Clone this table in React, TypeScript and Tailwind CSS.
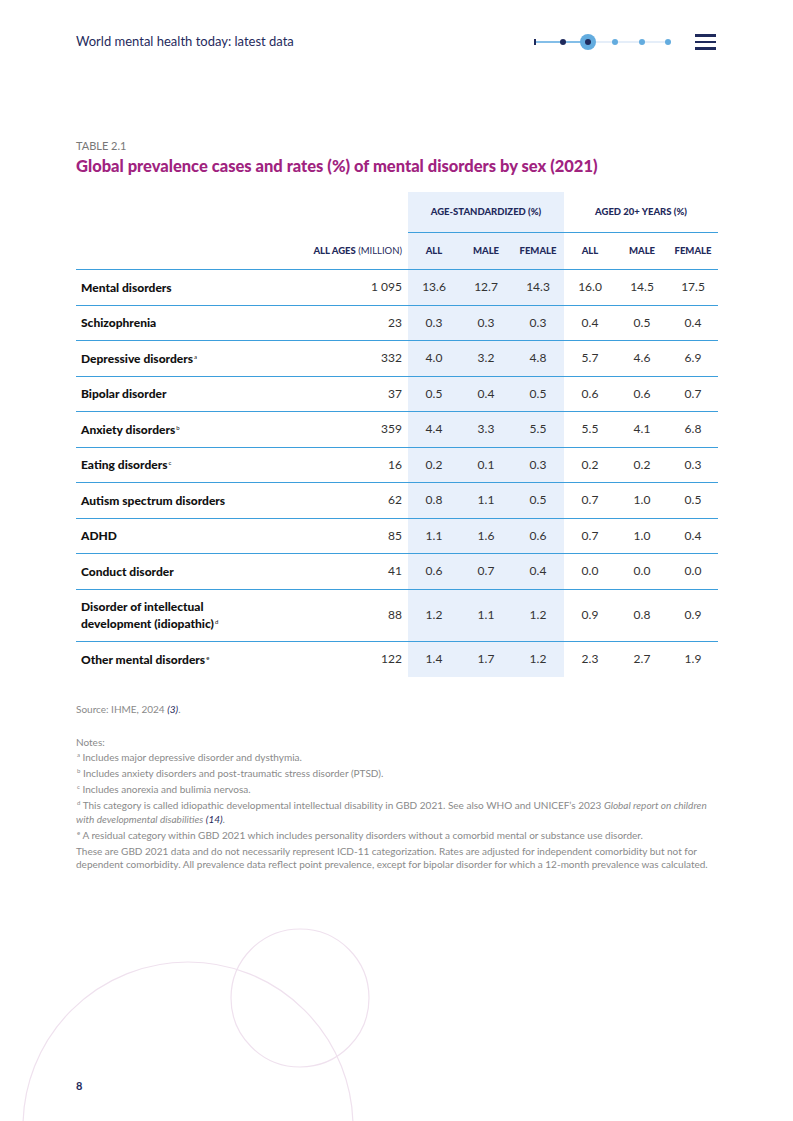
import React from 'react';

type Row = {
    label: React.ReactNode;
    total: string;
    values: string[];
    tall?: boolean;
};

const Sup = ({ children }: { children: React.ReactNode }) => (
    <span className="relative top-[-4px] ml-[1px] align-baseline text-[6px] font-normal leading-none">{children}</span>
);

const rows: Row[] = [
    { label: 'Mental disorders', total: '1 095', values: ['13.6', '12.7', '14.3', '16.0', '14.5', '17.5'] },
    { label: 'Schizophrenia', total: '23', values: ['0.3', '0.3', '0.3', '0.4', '0.5', '0.4'] },
    { label: <>Depressive disorders<Sup>a</Sup></>, total: '332', values: ['4.0', '3.2', '4.8', '5.7', '4.6', '6.9'] },
    { label: 'Bipolar disorder', total: '37', values: ['0.5', '0.4', '0.5', '0.6', '0.6', '0.7'] },
    { label: <>Anxiety disorders<Sup>b</Sup></>, total: '359', values: ['4.4', '3.3', '5.5', '5.5', '4.1', '6.8'] },
    { label: <>Eating disorders<Sup>c</Sup></>, total: '16', values: ['0.2', '0.1', '0.3', '0.2', '0.2', '0.3'] },
    { label: 'Autism spectrum disorders', total: '62', values: ['0.8', '1.1', '0.5', '0.7', '1.0', '0.5'] },
    { label: 'ADHD', total: '85', values: ['1.1', '1.6', '0.6', '0.7', '1.0', '0.4'] },
    { label: 'Conduct disorder', total: '41', values: ['0.6', '0.7', '0.4', '0.0', '0.0', '0.0'] },
    {
        label: <>Disorder of intellectual<br />development (idiopathic)<Sup>d</Sup></>,
        total: '88',
        values: ['1.2', '1.1', '1.2', '0.9', '0.8', '0.9'],
        tall: true,
    },
    { label: <>Other mental disorders<Sup>e</Sup></>, total: '122', values: ['1.4', '1.7', '1.2', '2.3', '2.7', '1.9'] },
];

const subCols = ['w-[52px]', 'w-[52px]', 'w-[52px]', 'w-[52px]', 'w-[52px]', 'w-[50px]'];

function Progress() {
    return (
        <svg width="138" height="20" viewBox="0 0 138 20">
            <line x1="1" y1="10" x2="54" y2="10" stroke="#5aa9e0" strokeWidth="1.5" />
            <line x1="54" y1="10" x2="134" y2="10" stroke="#dde9f7" strokeWidth="1.5" />
            <rect x="0" y="7" width="2" height="6" fill="#1f2a5c" />
            <circle cx="29" cy="10" r="3" fill="#1f2a5c" />
            <circle cx="54" cy="10" r="8" fill="#63acdf" />
            <circle cx="54" cy="10" r="3" fill="#1f2a5c" />
            <circle cx="81" cy="10" r="3" fill="#63acdf" />
            <circle cx="108" cy="10" r="3" fill="#63acdf" />
            <circle cx="134" cy="10" r="3" fill="#63acdf" />
        </svg>
    );
}

export default function App() {
    return (
        <div className="relative h-[1121px] w-[793px] overflow-hidden bg-white font-['Lato',sans-serif] text-[#222]">
            {/* decorative circles */}
            <svg className="absolute left-0 top-0" width="793" height="1121" viewBox="0 0 793 1121">
                <circle cx="188" cy="1127" r="165" fill="none" stroke="#efe1ee" strokeWidth="1.2" />
                <circle cx="300" cy="998" r="69" fill="none" stroke="#efe1ee" strokeWidth="1.2" />
            </svg>

            <div className="relative px-[76px]">
                {/* Header */}
                <div className="flex h-[84px] items-center justify-between">
                    <span className="text-[13px] text-[#1f2a5c]">World mental health today: latest data</span>
                    <div className="flex items-center gap-[23px] pr-[1px]">
                        <Progress />
                        <div className="flex w-[21px] flex-col gap-[4px]">
                            <span className="h-[2.5px] bg-[#1f2a5c]" />
                            <span className="h-[2.5px] bg-[#1f2a5c]" />
                            <span className="h-[2.5px] bg-[#1f2a5c]" />
                        </div>
                    </div>
                </div>

                {/* Title */}
                <div className="mt-[55px] text-[11px] uppercase leading-[14px] text-[#777]">Table 2.1</div>
                <h1 className="mt-[3px] text-[16.5px] font-black leading-[20px] text-[#a0237f]">
                    Global prevalence cases and rates (%) of mental disorders by sex (2021)
                </h1>

                {/* Table */}
                <div className="mt-[16px] w-[642px] text-[12px]">
                    <div className="flex h-[41px]">
                        <div className="flex-1" />
                        <div className="flex w-[156px] items-center justify-center border-b-[1.5px] border-[#3d9fdc] bg-[#e8f0fb] text-[9.5px] font-black uppercase text-[#1f2a5c]">
                            Age-standardized (%)
                        </div>
                        <div className="flex w-[154px] items-center justify-center border-b-[1.5px] border-[#3d9fdc] text-[9.5px] font-black uppercase text-[#1f2a5c]">
                            Aged 20+ years (%)
                        </div>
                    </div>
                    <div className="flex h-[37px] border-b-[1.5px] border-[#3d9fdc] text-[9.5px] uppercase text-[#1f2a5c]">
                        <div className="flex-1" />
                        <div className="flex w-[140px] items-center justify-end pr-[6px]">
                            <span className="font-black">All ages</span>&nbsp;<span>(million)</span>
                        </div>
                        {['All', 'Male', 'Female', 'All', 'Male', 'Female'].map((h, i) => (
                            <div
                                key={i}
                                className={`flex items-center justify-center font-black ${subCols[i]} ${i < 3 ? 'bg-[#e8f0fb]' : ''}`}
                            >
                                {h}
                            </div>
                        ))}
                    </div>
                    {rows.map((r, idx) => (
                        <div
                            key={idx}
                            className={`flex ${r.tall ? 'h-[52px]' : 'h-[35.5px]'} ${idx < rows.length - 1 ? 'border-b-[1.5px] border-[#3d9fdc]' : ''}`}
                        >
                            <div className="flex flex-1 items-center pl-[5px] font-black leading-[17px] text-[#111]">
                                <span>{r.label}</span>
                            </div>
                            <div className="flex w-[140px] items-center justify-end pr-[6px] text-[#333]">{r.total}</div>
                            {r.values.map((v, i) => (
                                <div
                                    key={i}
                                    className={`flex items-center justify-center text-[#333] ${subCols[i]} ${i < 3 ? 'bg-[#e8f0fb]' : ''}`}
                                >
                                    {v}
                                </div>
                            ))}
                        </div>
                    ))}
                </div>

                {/* Source and notes */}
                <div className="mt-[26px] text-[10px] leading-[13px] text-[#8a8a8a]">
                    <p>
                        Source: IHME, 2024 <i className="text-[#1f2a5c]">(3)</i>.
                    </p>
                    <p className="mt-[20px]">Notes:</p>
                    <div className="mt-[2px] flex flex-col gap-[3px]">
                        <p><Sup>a</Sup> Includes major depressive disorder and dysthymia.</p>
                        <p><Sup>b</Sup> Includes anxiety disorders and post-traumatic stress disorder (PTSD).</p>
                        <p><Sup>c</Sup> Includes anorexia and bulimia nervosa.</p>
                        <p className="leading-[13.5px]">
                            <Sup>d</Sup> This category is called idiopathic developmental intellectual disability in GBD 2021. See also WHO and UNICEF’s 2023{' '}
                            <i>Global report on children with developmental disabilities</i> <i className="text-[#1f2a5c]">(14)</i>.
                        </p>
                        <p><Sup>e</Sup> A residual category within GBD 2021 which includes personality disorders without a comorbid mental or substance use disorder.</p>
                        <p>
                            These are GBD 2021 data and do not necessarily represent ICD-11 categorization. Rates are adjusted for independent comorbidity but not for
                            dependent comorbidity. All prevalence data reflect point prevalence, except for bipolar disorder for which a 12-month prevalence was calculated.
                        </p>
                    </div>
                </div>
            </div>

            <div className="absolute left-[76px] top-[1078px] text-[11px] font-bold text-[#1f2a5c]">8</div>
        </div>
    );
}
